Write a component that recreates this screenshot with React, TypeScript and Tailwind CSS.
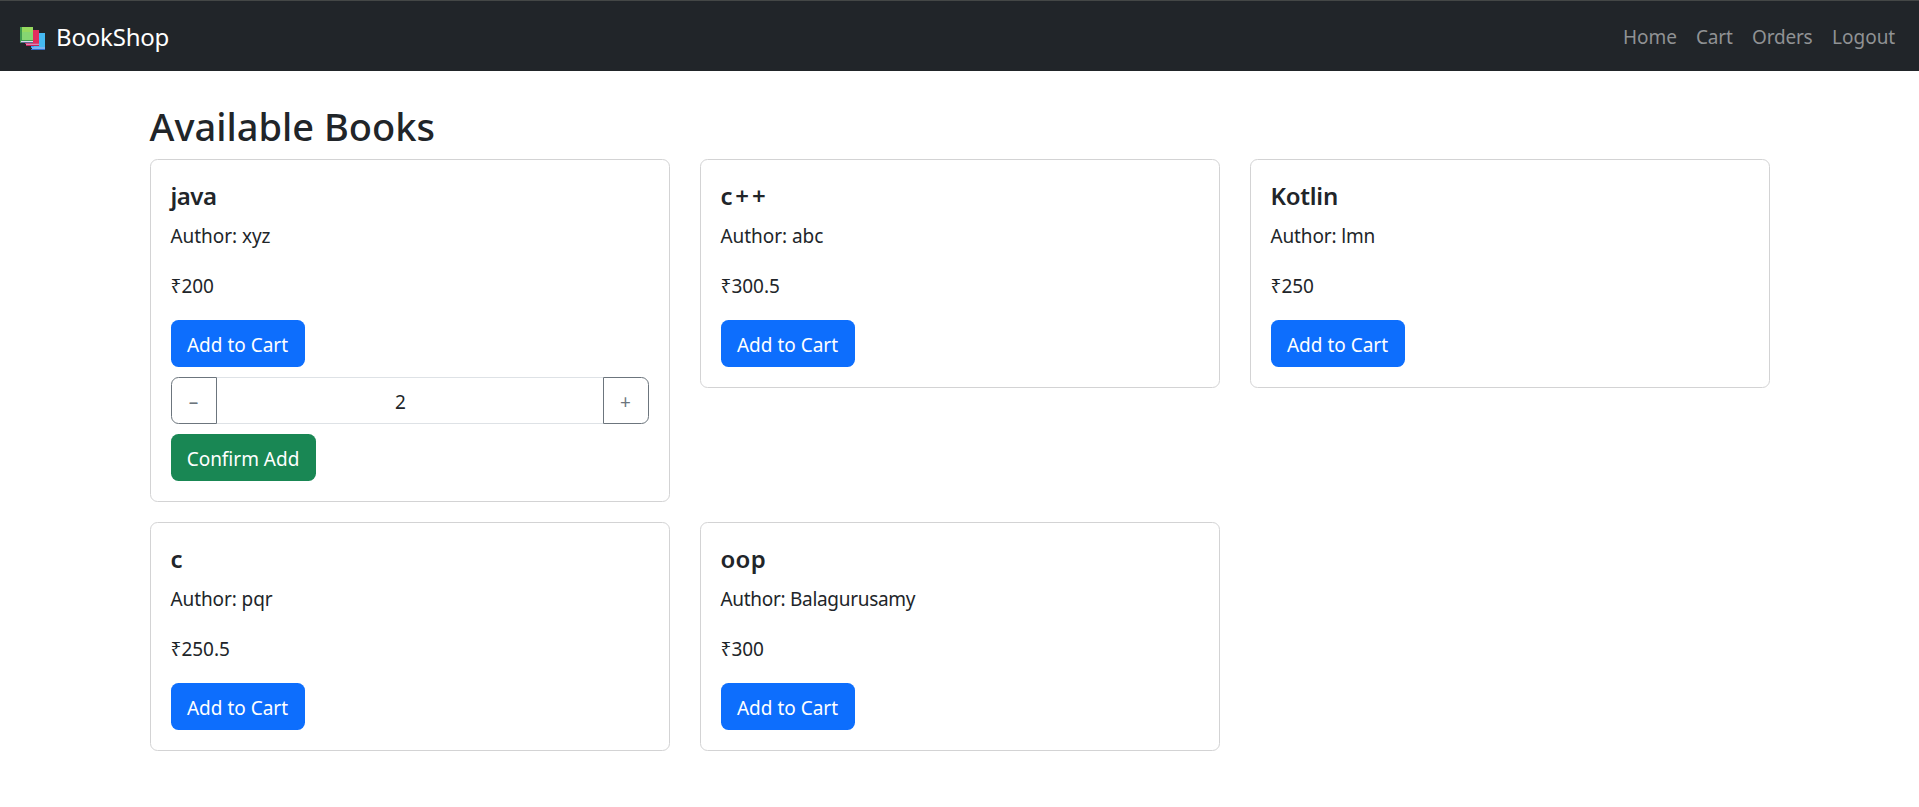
import React, { useState } from 'react';

type Book = { title: string; author: string; price: string; titleTracking: string; authorTracking: string };

const books: Book[] = [
  { title: 'java', author: 'xyz', price: '200', titleTracking: 'tracking-[-0.5px]', authorTracking: 'tracking-[-0.05px]' },
  { title: 'c++', author: 'abc', price: '300.5', titleTracking: 'tracking-[2.8px]', authorTracking: 'tracking-[-0.05px]' },
  { title: 'Kotlin', author: 'lmn', price: '250', titleTracking: 'tracking-[-0.25px]', authorTracking: 'tracking-[-0.15px]' },
  { title: 'c', author: 'pqr', price: '250.5', titleTracking: '', authorTracking: 'tracking-[-0.1px]' },
  { title: 'oop', author: 'Balagurusamy', price: '300', titleTracking: 'tracking-[0.3px]', authorTracking: 'tracking-[-0.3px]' },
];

const links = [
  { label: 'Home', width: 'w-[53px]' },
  { label: 'Cart', width: 'w-[36px] tracking-[-0.2px]' },
  { label: 'Orders', width: 'w-[60px] tracking-[-0.2px]' },
  { label: 'Logout', width: 'w-[62px]' },
];

function BooksLogo() {
  return (
    <svg className="mt-1 h-6 w-[26px] shrink-0" viewBox="0 0 26 24">
      <path d="M13 7h12v17H12v-2h-1v-2h2z" fill="#2f9df0" />
      <path d="M14 7h11v14H14z" fill="#45b9f2" />
      <path d="M12 21.5h13v1H12z" fill="#c8c4f4" />
      <path d="M11 24v-1h14v1z" fill="#2f6fd0" />
      <path d="M7 4h12v16H6v-2H5v-2h2z" fill="#c8215a" />
      <path d="M8 4h11v13H8z" fill="#e22d5e" />
      <path d="M6 17.7h13v1H6z" fill="#e3b4dc" />
      <path d="M0 1h13v16H0z" fill="#3f9b4f" />
      <path d="M2 1h11v13H2z" fill="#86d672" />
      <path d="M2 1h11v5H2z" fill="#96da5e" />
      <path d="M1 15h12v1H1z" fill="#dcd9f2" />
      <path d="M1 16h12v1H1z" fill="#5a6b8c" />
    </svg>
  );
}

function QuantityPicker() {
  const [qty, setQty] = useState(2);
  return (
    <>
      <div className="mt-2.5 flex h-[47px] leading-8">
        <button
          onClick={() => setQty(Math.max(1, qty - 1))}
          className="w-[46px] shrink-0 rounded-l-[7.5px] border border-[#6c757d] pt-[3px] text-[#6c757d]"
        >
          –
        </button>
        <div className="grow border-y border-[#dee2e6] pt-2 pr-[18px] text-center">{qty}</div>
        <button
          onClick={() => setQty(qty + 1)}
          className="w-[46px] shrink-0 rounded-r-[7.5px] border border-[#6c757d] pt-[3px] text-[#6c757d]"
        >
          +
        </button>
      </div>
      <button className="mt-2.5 block h-[47px] w-[145px] rounded-[7.5px] bg-[#198754] pt-[3px] text-center leading-8 text-white">
        Confirm Add
      </button>
    </>
  );
}

function BookCard({ book, picking }: { book: Book; picking: boolean }) {
  return (
    <div className="self-start rounded-[7.5px] border border-[#d3d3d4] bg-white p-5">
      <h5 className={`mb-[9px] text-[24px] leading-[31px] font-semibold ${book.titleTracking}`}>{book.title}</h5>
      <p className={`mb-[18px] leading-8 ${book.authorTracking}`}>Author: {book.author}</p>
      <p className="mb-[18px] leading-8">₹{book.price}</p>
      <button className="block h-[47px] w-[134px] rounded-[7.5px] bg-[#0d6efd] pt-[3px] text-center leading-8 text-white">
        Add to Cart
      </button>
      {picking && <QuantityPicker />}
    </div>
  );
}

export default function App() {
  return (
    <div className="min-h-screen bg-white font-['Noto_Sans','Open_Sans',sans-serif] text-[19px] text-[#212529]">
      <nav className="flex h-[71px] items-center justify-between border-t border-[#444746] bg-[#212529] pr-[25px] pl-5">
        <a className="flex items-center text-[24px] leading-8 text-white">
          <BooksLogo />
          <span className="ml-[10px] pt-0.5 tracking-[-0.2px]">BookShop</span>
        </a>
        <div className="flex gap-5 pt-0.5 leading-7 text-[#909294]">
          {links.map((link) => (
            <a key={link.label} className={`whitespace-nowrap ${link.width}`}>
              {link.label}
            </a>
          ))}
        </div>
      </nav>
      <main className="mx-auto mt-[30px] w-[1620px]">
        <h2 className="mb-2 text-[38px] leading-[50px] font-medium">Available Books</h2>
        <div className="grid grid-cols-3 gap-x-[30px] gap-y-5">
          {books.map((book) => (
            <BookCard key={book.title} book={book} picking={book.title === 'java'} />
          ))}
        </div>
      </main>
    </div>
  );
}
